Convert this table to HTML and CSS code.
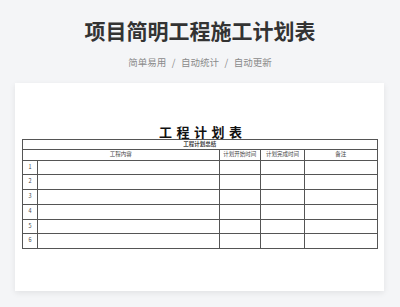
FILE: index.html
```html
<!DOCTYPE html>
<html lang="zh">
<head>
<meta charset="utf-8">
<link rel="stylesheet" href="styles.css">
</head>
<body>
<div class="page">
  <h1 class="title">项目简明工程施工计划表</h1>
  <p class="sub"><span>简单易用</span><span class="sep">/</span><span>自动统计</span><span class="sep">/</span><span>自动更新</span></p>
  <div class="card">
    <div class="sheet-title">工程计划表</div>
    <table class="sheet">
      <colgroup>
        <col class="c-no"><col class="c-content"><col class="c-start"><col class="c-end"><col class="c-note">
      </colgroup>
      <tr class="r-sum"><td colspan="5" class="sum">工程计划总结</td></tr>
      <tr class="r-head"><td colspan="2">工程内容</td><td>计划开始时间</td><td>计划完成时间</td><td>备注</td></tr>
      <tr class="r-data"><td class="no">1</td><td></td><td></td><td></td><td></td></tr>
      <tr class="r-data"><td class="no">2</td><td></td><td></td><td></td><td></td></tr>
      <tr class="r-data"><td class="no">3</td><td></td><td></td><td></td><td></td></tr>
      <tr class="r-data"><td class="no">4</td><td></td><td></td><td></td><td></td></tr>
      <tr class="r-data"><td class="no">5</td><td></td><td></td><td></td><td></td></tr>
      <tr class="r-data"><td class="no">6</td><td></td><td></td><td></td><td></td></tr>
    </table>
  </div>
</div>
</body>
</html>
```
FILE: styles.css
```css
html, body {
  margin: 0;
  padding: 0;
  background: #f4f5f7;
  font-family: "Noto Sans CJK SC", "Noto Sans", sans-serif;
  overflow: hidden;
}
.page {
  width: 400px;
  height: 307px;
  padding-top: 15px;
  box-sizing: border-box;
}
.title {
  margin: 0;
  text-align: center;
  font-size: 21px;
  line-height: 30px;
  font-weight: 700;
  color: #333;
}
.sub {
  margin: 9px 0 0;
  text-align: center;
  font-size: 9.5px;
  line-height: 16px;
  color: #8a8a8a;
}
.sep {
  margin: 0 5.5px;
}
.card {
  margin: 13px 16px 0 15px;
  height: 208px;
  background: #fff;
  box-shadow: 0 2px 6px rgba(0,0,0,0.08);
  padding: 41px 7px 0 7px;
  box-sizing: border-box;
}
.sheet-title {
  text-align: center;
  font-size: 13px;
  line-height: 15px;
  font-weight: 700;
  letter-spacing: 4.5px;
  padding-left: 4.5px;
  color: #111;
  margin-left: 2px;
}
.sheet {
  width: 355px;
  border-collapse: collapse;
  table-layout: fixed;
  border: 1.5px solid #888;
}
.sheet td {
  border: 1px solid #555;
  padding: 0;
  font-size: 5.5px;
  color: #444;
  text-align: center;
  vertical-align: middle;
  line-height: 1;
}
.c-no { width: 15px; }
.c-content { width: 181.7px; }
.c-start { width: 41.3px; }
.c-end { width: 44px; }
.c-note { width: 72.7px; }
.r-sum td { height: 9px; }
.sum { font-weight: 700; color: #222; }
.r-head td { height: 9.6px; }
.r-data td { height: 13.75px; }
.no { font-size: 6px; color: #333; }
```
